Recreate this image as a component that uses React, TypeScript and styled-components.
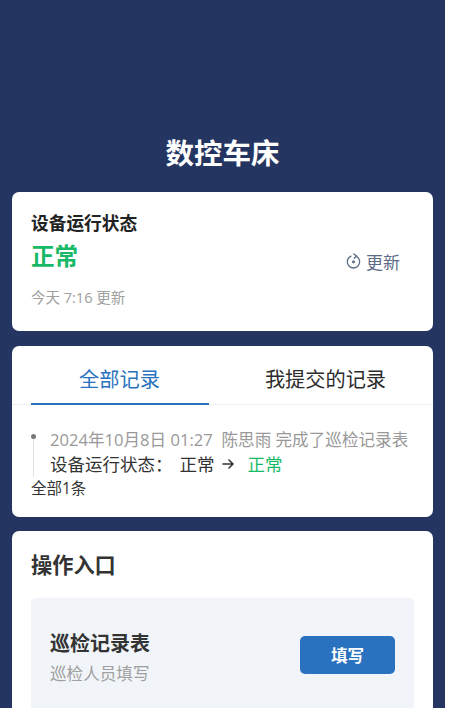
import React from "react";
import styled, { createGlobalStyle } from "styled-components";

const Global = createGlobalStyle`
  html, body { margin: 0; padding: 0; background: #fff; height: 708px; overflow: hidden; }
  * { box-sizing: border-box; }
  body { font-family: "Open Sans", "Noto Sans CJK SC", sans-serif; }
`;

const Page = styled.div`
  width: 445px;
  height: 708px;
  overflow: hidden;
  background: #243561;
  padding: 133px 12px 0;
  display: flex;
  flex-direction: column;
`;

const Title = styled.h1`
  margin: 0 0 19px;
  height: 40px;
  line-height: 40px;
  font-size: 28.5px;
  font-weight: 700;
  color: #fff;
  text-align: center;
`;

const Card = styled.section`
  background: #fff;
  border-radius: 7px;
  flex: none;
`;

const StatusCard = styled(Card)`
  height: 139px;
  margin-bottom: 15px;
  padding: 19px 33px 0 19px;
  display: flex;
  justify-content: space-between;
`;

const StatusInfo = styled.div`
  display: flex;
  flex-direction: column;
`;

const StatusLabel = styled.div`
  font-size: 17.7px;
  line-height: 25px;
  font-weight: 700;
  color: #222;
`;

const StatusValue = styled.div`
  font-size: 23.6px;
  line-height: 34px;
  font-weight: 700;
  color: #17b966;
  margin-top: 3px;
`;

const StatusTime = styled.div`
  font-size: 14.5px;
  line-height: 20px;
  color: #a0a0a0;
  margin-top: 15px;
`;

const RefreshButton = styled.div`
  display: flex;
  align-items: center;
  gap: 5px;
  height: 26px;
  margin-top: 37px;
  font-size: 17px;
  color: #5a6b85;
`;

const RecordsCard = styled(Card)`
  height: 171px;
  margin-bottom: 14px;
`;

const Tabs = styled.div`
  display: flex;
  height: 59px;
  padding-left: 19px;
  border-bottom: 1px solid #eceef0;
`;

const Tab = styled.div<{ $active?: boolean }>`
  width: ${(p) => (p.$active ? "178px" : "auto")};
  flex: ${(p) => (p.$active ? "none" : "1")};
  text-align: center;
  font-size: 20.2px;
  line-height: 67px;
  height: 59px;
  color: ${(p) => (p.$active ? "#2a72bd" : "#2b2b2b")};
  border-bottom: ${(p) => (p.$active ? "2px solid #2a72bd" : "none")};
  padding-left: ${(p) => (p.$active ? "0" : "12px")};
  padding-right: ${(p) => (p.$active ? "1px" : "3px")};
`;

const Records = styled.div`
  padding: 31px 0 0 19px;
`;

const RecordItem = styled.div`
  display: flow-root;
  position: relative;
  margin-left: 2px;
  padding-left: 16px;
  border-left: 1px solid #e2e2e2;
  height: 41px;
`;

const Dot = styled.span`
  position: absolute;
  left: -3px;
  top: -2px;
  width: 5px;
  height: 5px;
  border-radius: 50%;
  background: #777;
`;

const RecordMeta = styled.div`
  font-size: 16.6px;
  line-height: 25px;
  margin-top: -9px;
  color: #999;
  white-space: pre;
`;

const RecordChange = styled.div`
  display: flex;
  align-items: center;
  font-size: 17.5px;
  line-height: 24px;
  color: #333;
  white-space: pre;
`;

const FieldName = styled.span`
  margin-right: 7px;
`;

const Arrow = styled.svg`
  margin: 0 13px 0 7px;
`;

const NewValue = styled.span`
  color: #17b966;
`;

const Total = styled.div`
  font-size: 15.5px;
  line-height: 22px;
  color: #333;
`;

const EntryCard = styled(Card)`
  padding: 17px 19px 0;
  height: 260px;
`;

const EntryTitle = styled.h2`
  margin: 0 0 17px;
  font-size: 21.2px;
  line-height: 33px;
  font-weight: 700;
  color: #333;
`;

const EntryPanel = styled.div`
  background: #f1f5f9;
  border-radius: 5px;
  height: 180px;
  padding: 31px 19px 0;
  display: flex;
  justify-content: space-between;
`;

const EntryName = styled.div`
  font-size: 20px;
  line-height: 30px;
  font-weight: 700;
  color: #333;
`;

const EntryHint = styled.div`
  font-size: 16.6px;
  line-height: 26px;
  margin-top: 2px;
  color: #a0a0a0;
`;

const FillButton = styled.button`
  width: 95px;
  height: 38px;
  margin-top: 7px;
  border: none;
  border-radius: 5px;
  padding: 0;
  background: #2a72c0;
  color: #fff;
  font-family: inherit;
  font-size: 16.5px;
  font-weight: 700;
`;

export default function App() {
  return (
    <>
      <Global />
      <Page>
        <Title>数控车床</Title>
        <StatusCard>
          <StatusInfo>
            <StatusLabel>设备运行状态</StatusLabel>
            <StatusValue>正常</StatusValue>
            <StatusTime>今天 7:16 更新</StatusTime>
          </StatusInfo>
          <RefreshButton>
            <svg width="15" height="16" viewBox="0 0 15 16" fill="none">
              <path d="M10.2 3.2A6.2 6.2 0 1 1 5 3.1" stroke="#5a6b85" strokeWidth="1.3" strokeLinecap="round" />
              <path d="M7.8 0.9L10.6 3.1L8.2 5.3" stroke="#5a6b85" strokeWidth="1.3" strokeLinecap="round" strokeLinejoin="round" />
              <circle cx="7.5" cy="8.8" r="1.5" fill="#5a6b85" />
            </svg>
            更新
          </RefreshButton>
        </StatusCard>
        <RecordsCard>
          <Tabs>
            <Tab $active>全部记录</Tab>
            <Tab>我提交的记录</Tab>
          </Tabs>
          <Records>
            <RecordItem>
              <Dot />
              <RecordMeta>2024年10月8日 01:27  陈思雨 完成了巡检记录表</RecordMeta>
              <RecordChange>
                <FieldName>设备运行状态：</FieldName>正常
                <Arrow width="13" height="12" viewBox="0 0 13 12" fill="none">
                  <path d="M1 6H11M7 2L11 6L7 10" stroke="#333" strokeWidth="1.6" strokeLinecap="round" strokeLinejoin="round" />
                </Arrow>
                <NewValue>正常</NewValue>
              </RecordChange>
            </RecordItem>
            <Total>全部1条</Total>
          </Records>
        </RecordsCard>
        <EntryCard>
          <EntryTitle>操作入口</EntryTitle>
          <EntryPanel>
            <div>
              <EntryName>巡检记录表</EntryName>
              <EntryHint>巡检人员填写</EntryHint>
            </div>
            <FillButton>填写</FillButton>
          </EntryPanel>
        </EntryCard>
      </Page>
    </>
  );
}
